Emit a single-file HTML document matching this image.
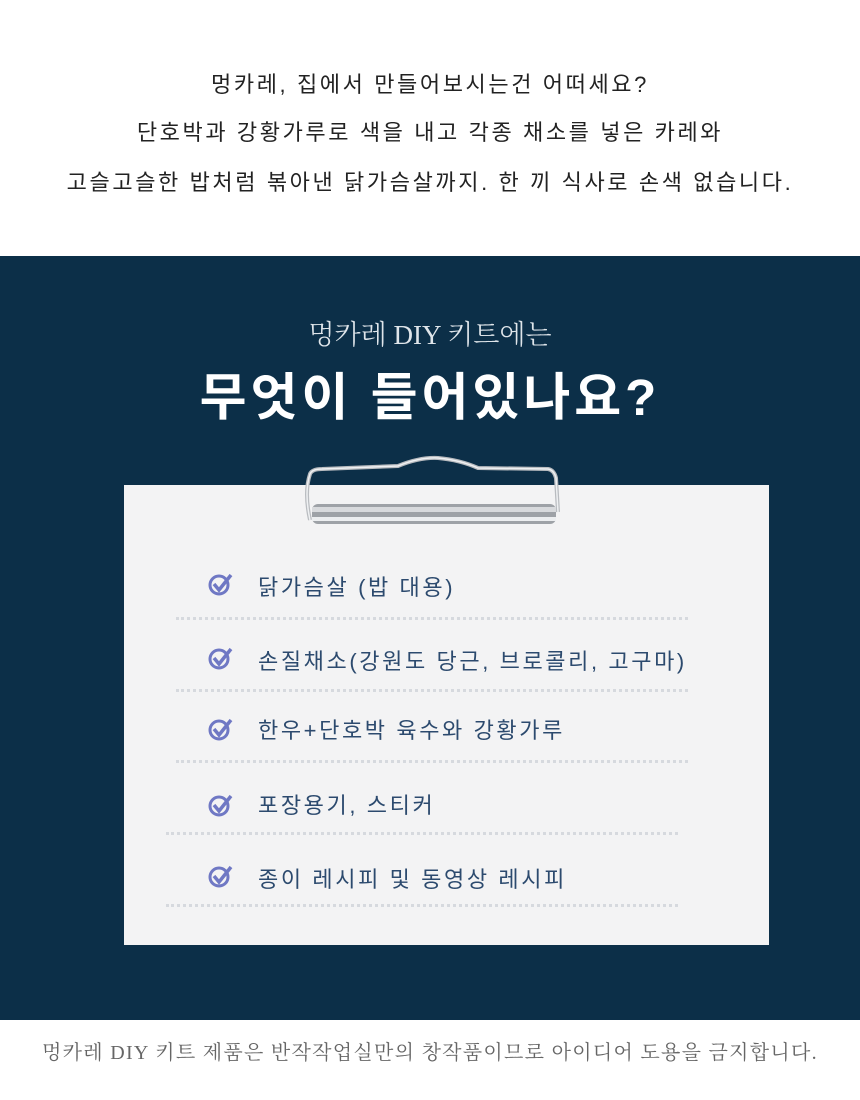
<!DOCTYPE html>
<html><head><meta charset="utf-8"><style>
body{margin:0;width:860px;height:1100px;background:#fff;position:relative;overflow:hidden;font-family:"Liberation Sans","Noto Sans CJK KR",sans-serif}
.t{position:absolute;left:0;width:860px;text-align:center;white-space:nowrap}
.top{font-size:22px;color:#222;letter-spacing:2.6px}
.dark{position:absolute;left:0;top:256px;width:860px;height:764px;background:#0c2f48}
.card{position:absolute;left:124px;top:485px;width:645px;height:460px;background:#f3f3f4}
.it{position:absolute;left:258px;font-size:22px;color:#2c4a6e;white-space:nowrap;line-height:30px;letter-spacing:2.6px}
.ck{position:absolute;left:207px}
.dl{position:absolute;height:0;border-top:3px dotted #d6d9de}
</style></head><body>
<div class="t top" style="top:67px">멍카레, 집에서 만들어보시는건 어떠세요?</div>
<div class="t top" style="top:115px">단호박과 강황가루로 색을 내고 각종 채소를 넣은 카레와</div>
<div class="t top" style="top:165px">고슬고슬한 밥처럼 볶아낸 닭가슴살까지. 한 끼 식사로 손색 없습니다.</div>
<div class="dark"></div>
<div class="t" style="top:313px;font-size:27px;color:#dfe5ea;font-family:'Liberation Serif','Noto Serif CJK SC',serif;font-weight:300">멍카레 DIY 키트에는</div>
<div class="t" style="top:356px;font-size:51px;font-weight:bold;color:#fff;letter-spacing:4px">무엇이 들어있나요?</div>
<div class="card"></div>
<svg style="position:absolute;left:300px;top:452px" width="262" height="75" viewBox="0 0 262 75">
<path d="M10 68 Q4 40 10 22 Q12 17 22 17 L98 14 Q120 5 138 6 Q160 8 178 16 L248 17 Q254 18 256 26 L258 60" fill="none" stroke="#b9bcc0" stroke-width="4"/>
<path d="M10 68 Q4 40 10 22 Q12 17 22 17 L98 14 Q120 5 138 6 Q160 8 178 16 L248 17 Q254 18 256 26 L258 60" fill="none" stroke="#eef0f2" stroke-width="1.5"/>
<rect x="12" y="52" width="244" height="20" rx="6" fill="#9ea2a7"/>
<rect x="12" y="55" width="244" height="5" fill="#d8dadd"/>
<rect x="12" y="65" width="244" height="4" fill="#eceef0"/>
</svg>
<svg class="ck" style="top:571px" width="28" height="28" viewBox="0 0 28 28"><circle cx="12" cy="14" r="9" fill="none" stroke="#6f78c4" stroke-width="3"/><path d="M7 13 l5 6 l12 -15" fill="none" stroke="#6f78c4" stroke-width="3.5"/></svg>
<svg class="ck" style="top:645px" width="28" height="28" viewBox="0 0 28 28"><circle cx="12" cy="14" r="9" fill="none" stroke="#6f78c4" stroke-width="3"/><path d="M7 13 l5 6 l12 -15" fill="none" stroke="#6f78c4" stroke-width="3.5"/></svg>
<svg class="ck" style="top:716px" width="28" height="28" viewBox="0 0 28 28"><circle cx="12" cy="14" r="9" fill="none" stroke="#6f78c4" stroke-width="3"/><path d="M7 13 l5 6 l12 -15" fill="none" stroke="#6f78c4" stroke-width="3.5"/></svg>
<svg class="ck" style="top:792px" width="28" height="28" viewBox="0 0 28 28"><circle cx="12" cy="14" r="9" fill="none" stroke="#6f78c4" stroke-width="3"/><path d="M7 13 l5 6 l12 -15" fill="none" stroke="#6f78c4" stroke-width="3.5"/></svg>
<svg class="ck" style="top:863px" width="28" height="28" viewBox="0 0 28 28"><circle cx="12" cy="14" r="9" fill="none" stroke="#6f78c4" stroke-width="3"/><path d="M7 13 l5 6 l12 -15" fill="none" stroke="#6f78c4" stroke-width="3.5"/></svg>
<div class="it" style="top:573px">닭가슴살 (밥 대용)</div>
<div class="it" style="top:647px">손질채소(강원도 당근, 브로콜리, 고구마)</div>
<div class="it" style="top:716px">한우+단호박 육수와 강황가루</div>
<div class="it" style="top:791px">포장용기, 스티커</div>
<div class="it" style="top:865px">종이 레시피 및 동영상 레시피</div>
<div class="dl" style="left:176px;width:512px;top:617px"></div>
<div class="dl" style="left:176px;width:512px;top:689px"></div>
<div class="dl" style="left:176px;width:512px;top:760px"></div>
<div class="dl" style="left:166px;width:512px;top:832px"></div>
<div class="dl" style="left:166px;width:512px;top:904px"></div>
<div class="t" style="top:1036px;font-size:20px;color:#666;letter-spacing:1.3px;font-family:'Liberation Serif','Noto Serif CJK SC',serif">멍카레 DIY 키트 제품은 반작작업실만의 창작품이므로 아이디어 도용을 금지합니다.</div>
</body></html>
